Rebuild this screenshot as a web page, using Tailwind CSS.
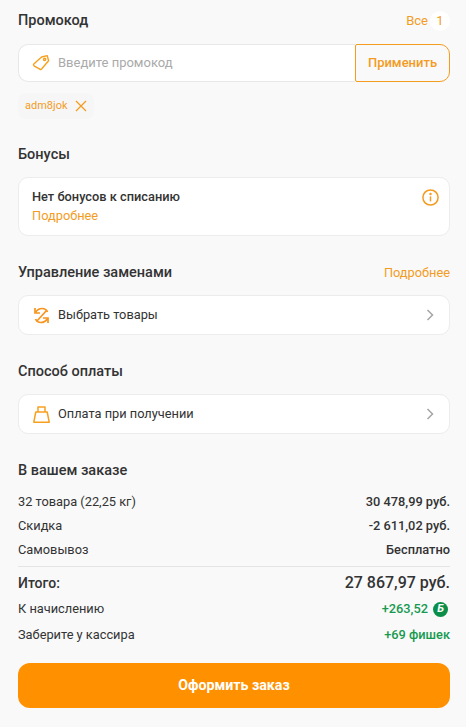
<!DOCTYPE html>
<html lang="ru">
<head>
  <meta charset="UTF-8">
  <title>Оформление заказа</title>
  <script src="https://cdn.jsdelivr.net/npm/@tailwindcss/browser@4"></script>
</head>
<body class="bg-[#f9f9fa] font-['Roboto',sans-serif] text-[#333333] w-[466px] h-[727px] overflow-hidden">
  <div class="pl-[18px] pr-[16px] pt-[11px]">
    <!-- Промокод -->
    <div class="flex items-center justify-between h-[20px]">
      <h2 class="text-[14.5px] font-medium">Промокод</h2>
      <div class="flex items-center text-[13px] text-[#f39c1f]">
        <span>Все</span>
        <span class="ml-[2px] w-[20px] h-[20px] rounded-full bg-white flex items-center justify-center">1</span>
      </div>
    </div>
    <div class="mt-[13px] flex h-[38px]">
      <div class="flex-1 flex items-center bg-white border border-r-0 border-[#e8e8e8] rounded-l-[10px] pl-[13px]">
        <svg class="w-[18px] h-[18px]" viewBox="0 0 18 18" fill="none" stroke="#f7a01e" stroke-width="1.4" stroke-linejoin="round"><path d="M1.8 10 9.6 3l5.6-1.4 1.4 5.2-7 8.2a1.3 1.3 0 0 1-1.8.2L2 11.8a1.3 1.3 0 0 1-.2-1.8Z"/><circle cx="12.6" cy="5.4" r="1.1"/></svg>
        <span class="ml-[8px] text-[13px] text-[#aaaaaa]">Введите промокод</span>
      </div>
      <button class="w-[95px] border border-[#f39c1f] rounded-r-[10px] rounded-l-[2px] text-[13px] font-medium text-[#f39c1f]">Применить</button>
    </div>
    <div class="mt-[11px] inline-flex items-center h-[26px] px-[7px] rounded-[8px] bg-[#f6f6f7]">
      <span class="text-[11px] text-[#f39c1f]">adm8jok</span>
      <svg class="ml-[7px] w-[12px] h-[12px]" viewBox="0 0 12 12" fill="none" stroke="#f39c1f" stroke-width="1.3"><path d="M1 1l10 10M11 1 1 11"/></svg>
    </div>

    <!-- Бонусы -->
    <h2 class="mt-[26px] text-[14.5px] font-medium leading-[20px]">Бонусы</h2>
    <div class="mt-[12px] bg-white border border-[#ececec] rounded-[10px] h-[59px] pl-[13px] pr-[10px] pt-[9px] flex justify-between">
      <div>
        <div class="text-[12.8px] font-medium leading-[19px]">Нет бонусов к списанию</div>
        <div class="text-[12.8px] text-[#f39c1f] leading-[19px]">Подробнее</div>
      </div>
      <svg class="w-[17px] h-[17px] mt-[2px]" viewBox="0 0 17 17" fill="none" stroke="#f39c1f" stroke-width="1.5"><circle cx="8.5" cy="8.5" r="7.6"/><path d="M8.5 7.4v5"/><circle cx="8.5" cy="4.9" r=".5" fill="#f39c1f"/></svg>
    </div>

    <!-- Управление заменами -->
    <div class="mt-[27px] flex items-center justify-between h-[20px]">
      <h2 class="text-[14.5px] font-medium">Управление заменами</h2>
      <span class="text-[12.8px] text-[#f39c1f]">Подробнее</span>
    </div>
    <div class="mt-[12px] bg-white border border-[#ececec] rounded-[10px] h-[40px] pl-[14px] pr-[15px] flex items-center justify-between">
      <div class="flex items-center">
        <svg class="w-[17px] h-[17px]" viewBox="0 0 17 17" fill="none" stroke="#f7941d" stroke-width="1.7"><path d="M2 1v5h5"/><path d="M2.500 5.500C4 3 6 1.500 9 1.500c2.500 0 4.500 1.300 5.500 3.500"/><path d="M15 16v-5h-5"/><path d="M14.500 11.500C13 14 11 15.500 8 15.500c-2.500 0-4.500-1.300-5.500-3.500"/><path d="M3.500 14.500 14 3"/></svg>
        <span class="ml-[8px] text-[12.8px]">Выбрать товары</span>
      </div>
      <svg class="w-[8px] h-[12px]" viewBox="0 0 8 12" fill="none" stroke="#a5a5a5" stroke-width="1.5"><path d="M1.500 1 6.500 6l-5 5"/></svg>
    </div>

    <!-- Способ оплаты -->
    <h2 class="mt-[27px] text-[14.5px] font-medium leading-[20px]">Способ оплаты</h2>
    <div class="mt-[12px] bg-white border border-[#ececec] rounded-[10px] h-[40px] pl-[14px] pr-[15px] flex items-center justify-between">
      <div class="flex items-center">
        <svg class="w-[17px] h-[17px]" viewBox="0 0 17 17" fill="none" stroke="#f7a01e" stroke-width="1.5" stroke-linejoin="round"><path d="M2.800 6h11.400l2 10.200H.8Z"/><path d="M5 6V1h7v5"/></svg>
        <span class="ml-[8px] text-[12.8px]">Оплата при получении</span>
      </div>
      <svg class="w-[8px] h-[12px]" viewBox="0 0 8 12" fill="none" stroke="#a5a5a5" stroke-width="1.5"><path d="M1.500 1 6.500 6l-5 5"/></svg>
    </div>

    <!-- В вашем заказе -->
    <h2 class="mt-[27px] text-[14.5px] font-medium leading-[20px]">В вашем заказе</h2>
    <div class="mt-[11px] flex flex-col gap-[4px] text-[12.8px]">
      <div class="flex justify-between leading-[20px]"><span>32 товара (22,25 кг)</span><span class="font-medium">30 478,99 руб.</span></div>
      <div class="flex justify-between leading-[20px]"><span>Скидка</span><span class="font-medium">-2 611,02 руб.</span></div>
      <div class="flex justify-between leading-[20px]"><span>Самовывоз</span><span class="font-medium">Бесплатно</span></div>
    </div>
    <div class="mt-[6px] border-t border-[#e4e4e4] pt-[4px] flex items-center justify-between h-[29px]">
      <span class="text-[14px] font-medium">Итого:</span>
      <span class="text-[16px] font-medium">27 867,97 руб.</span>
    </div>
    <div class="mt-[3px] flex items-center justify-between h-[22px] text-[12.8px]">
      <span>К начислению</span>
      <div class="flex items-center font-medium text-[#179a50] mr-[2px]">
        <span>+263,52</span>
        <span class="ml-[5px] w-[15px] h-[15px] rounded-full bg-[#0a8f4a] text-white text-[11px] font-bold italic flex items-center justify-center">Б</span>
      </div>
    </div>
    <div class="mt-[4px] flex items-center justify-between h-[22px] text-[12.8px]">
      <span>Заберите у кассира</span>
      <span class="font-medium text-[#179a50]">+69 фишек</span>
    </div>
    <button class="mt-[17px] w-full h-[45px] rounded-[12px] bg-[#ff9100] text-white text-[14.2px] font-bold">Оформить заказ</button>
  </div>
</body>
</html>
